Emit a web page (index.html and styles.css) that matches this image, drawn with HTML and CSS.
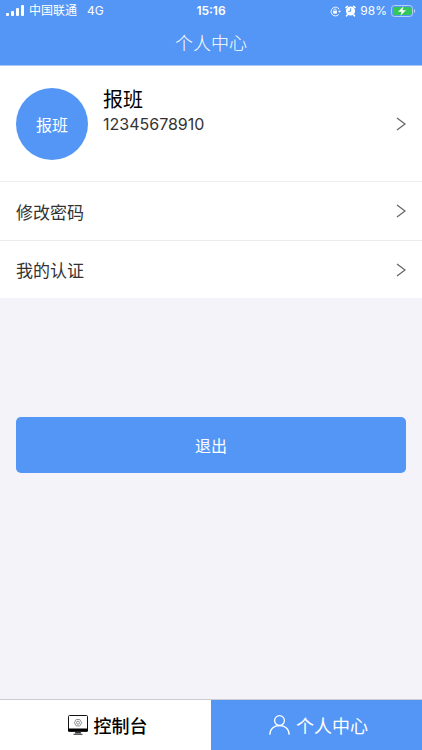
FILE: index.html
```html
<!DOCTYPE html>
<html lang="zh-CN">
<head>
  <meta charset="UTF-8" />
  <meta name="viewport" content="width=device-width, initial-scale=1.0"/>
  <title>个人中心</title>
  <link rel="stylesheet" href="styles.css">
</head>
<body>

<header>
  <div class="status-bar">
    <div class="status-left">
      <svg class="signal" width="18" height="12" viewBox="0 0 18 12" fill="currentColor">
        <rect x="0" y="8" width="3" height="3" rx="1"/>
        <rect x="5" y="6" width="3" height="5" rx="1"/>
        <rect x="10" y="3" width="3" height="8" rx="1"/>
        <rect x="15" y="0" width="3" height="11" rx="1"/>
      </svg>
      <span>中国联通</span>
      <span class="network">4G</span>
    </div>
    <span class="time">15:16</span>
    <div class="status-right">
      <svg width="11" height="11" viewBox="0 0 12 12" fill="none" stroke="currentColor">
        <path d="M9.6 9.2A4.8 4.8 0 1 1 10 3.4"/>
        <path d="M8.8 5.2H12L10.4 7.4z" fill="currentColor" stroke="none"/>
        <rect x="3.5" y="5.3" width="4" height="3" fill="currentColor" stroke="none"/>
        <path d="M4.3 5.5V4.4a1.2 1.2 0 0 1 2.4 0v1.1" stroke-width=".8"/>
      </svg>
      <svg class="alarm" width="11" height="12" viewBox="0 0 11 12">
        <circle cx="5.5" cy="6" r="4.6" fill="#fff"/>
        <path d="M1 2.6 2.4 1.4M10 2.6 8.6 1.4M2.2 10l-.6.8M8.8 10l.6.8" stroke="#fff" stroke-width="1.6" stroke-linecap="round"/>
        <path d="M5.7 3.2V6.3H3.2" fill="none" stroke="#5496f6"/>
      </svg>
      <span>98%</span>
      <svg width="25" height="12" viewBox="0 0 25 12">
        <rect x=".5" y=".5" width="21" height="11" rx="3" fill="none" stroke="#b5d0fb"/>
        <rect x="2" y="2" width="18" height="8" rx="1.5" fill="#34c759"/>
        <path d="M23 4v4c1.6-.6 1.6-3.4 0-4z" fill="#b5d0fb"/>
        <path d="M12.6 1.2 7 6.8h3.6L9.4 10.8 15 5.2h-3.6z" fill="#fff"/>
      </svg>
    </div>
  </div>
  <h1>个人中心</h1>
</header>

<main>
  <a class="profile" href="#">
    <div class="avatar">报班</div>
    <div class="profile-info">
      <h2>报班</h2>
      <p>12345678910</p>
    </div>
    <svg class="arrow" viewBox="0 0 10 14"><path d="M1 1l8 6-8 6"/></svg>
  </a>
  <a class="row" href="#">
    <span>修改密码</span>
    <svg class="arrow" viewBox="0 0 10 14"><path d="M1 1l8 6-8 6"/></svg>
  </a>
  <a class="row" href="#">
    <span>我的认证</span>
    <svg class="arrow" viewBox="0 0 10 14"><path d="M1 1l8 6-8 6"/></svg>
  </a>
  <button class="logout-btn" type="button">退出</button>
</main>

<nav class="tab-bar">
  <a class="tab" href="#">
    <svg width="20" height="20" viewBox="0 0 20 20">
      <rect x=".5" y=".5" width="19" height="15.5" rx="1" fill="#fff" stroke="#111"/>
      <path d="M0 13.5h20v2.2a1 1 0 0 1-1 1H1a1 1 0 0 1-1-1z" fill="#000"/>
      <path d="M7.5 16.5h5l.8 2h-6.6z" fill="#333"/>
      <path d="M5.5 19.3h9" stroke="#333"/>
      <path d="M8.2 4.5h3.6l1.8 3.2-1.8 3.2H8.2L6.4 7.7z" fill="none" stroke="#777" stroke-width=".8"/>
      <circle cx="10" cy="7.7" r="1.5" fill="none" stroke="#777" stroke-width=".8"/>
    </svg>
    <span>控制台</span>
  </a>
  <a class="tab active" href="#">
    <svg width="21" height="20" viewBox="0 0 21 20" fill="none" stroke="currentColor" stroke-width="1.3">
      <circle cx="10.5" cy="5.6" r="4.9"/>
      <path d="M.8 19.8C.8 14 5 10.5 10.5 10.5S20.2 14 20.2 19.8"/>
    </svg>
    <span>个人中心</span>
  </a>
</nav>

</body>
</html>
```
FILE: styles.css
```css
:root {
  --blue: #5496f6;
  --page-bg: #f3f3f9;
  --line: #ececef;
  --text: #333;
}

* {
  margin: 0;
  padding: 0;
  box-sizing: border-box;
}

body {
  min-height: 100vh;
  display: flex;
  flex-direction: column;
  background-color: var(--page-bg);
  color: var(--text);
  font-family: Inter, 'Noto Sans CJK SC', sans-serif;
}

a {
  color: inherit;
  text-decoration: none;
}

svg {
  display: block;
  flex-shrink: 0;
}

header {
  background-color: var(--blue);
  color: #fff;
  border-bottom: 1px solid #a9c8f8;
}

.status-bar {
  display: grid;
  grid-template-columns: 1fr auto 1fr;
  align-items: center;
  height: 22px;
  padding: 0 6px;
  font-size: 12px;
  line-height: 20px;
}

.status-left,
.status-right {
  display: flex;
  align-items: center;
  gap: 5px;
}

.status-right {
  justify-content: flex-end;
  gap: 4px;
}

.network {
  margin-left: 5px;
}

.time {
  font-weight: 600;
}

h1 {
  font-size: 18px;
  font-weight: 300;
  line-height: 43px;
  text-align: center;
}

main {
  flex: 1;
}

.profile,
.row {
  display: flex;
  align-items: center;
  padding: 0 16px;
  background-color: #fff;
}

.profile {
  height: 116px;
  border-bottom: 1px solid var(--line);
}

.row {
  justify-content: space-between;
  height: 58px;
  font-size: 17px;
}

.row + .row {
  border-top: 1px solid var(--line);
}

.avatar {
  display: flex;
  align-items: center;
  justify-content: center;
  width: 72px;
  height: 72px;
  border-radius: 50%;
  background-color: var(--blue);
  color: #fff;
  font-size: 16px;
}

.profile-info {
  flex: 1;
  align-self: flex-start;
  margin: 22px 0 0 15px;
}

h2 {
  color: #000;
  font-size: 20px;
  font-weight: 400;
  line-height: 24px;
}

.profile-info p {
  font-size: 16px;
  line-height: 24px;
}

.arrow {
  width: 10px;
  height: 14px;
  fill: none;
  stroke: #666;
  stroke-width: 1.3;
}

.logout-btn {
  display: block;
  width: calc(100% - 32px);
  height: 56px;
  margin: 119px auto 24px;
  border: none;
  border-radius: 5px;
  background-color: var(--blue);
  color: #fff;
  font-family: inherit;
  font-size: 16px;
  cursor: pointer;
}

.tab-bar {
  display: flex;
  border-top: 1px solid #ccc;
}

.tab {
  flex: 1;
  display: flex;
  align-items: center;
  justify-content: center;
  gap: 6px;
  height: 50px;
  padding-left: 4px;
  background-color: #fff;
  color: #000;
  font-size: 18px;
  font-weight: 500;
}

.tab.active {
  background-color: var(--blue);
  color: #fff;
  font-weight: 400;
}
```
